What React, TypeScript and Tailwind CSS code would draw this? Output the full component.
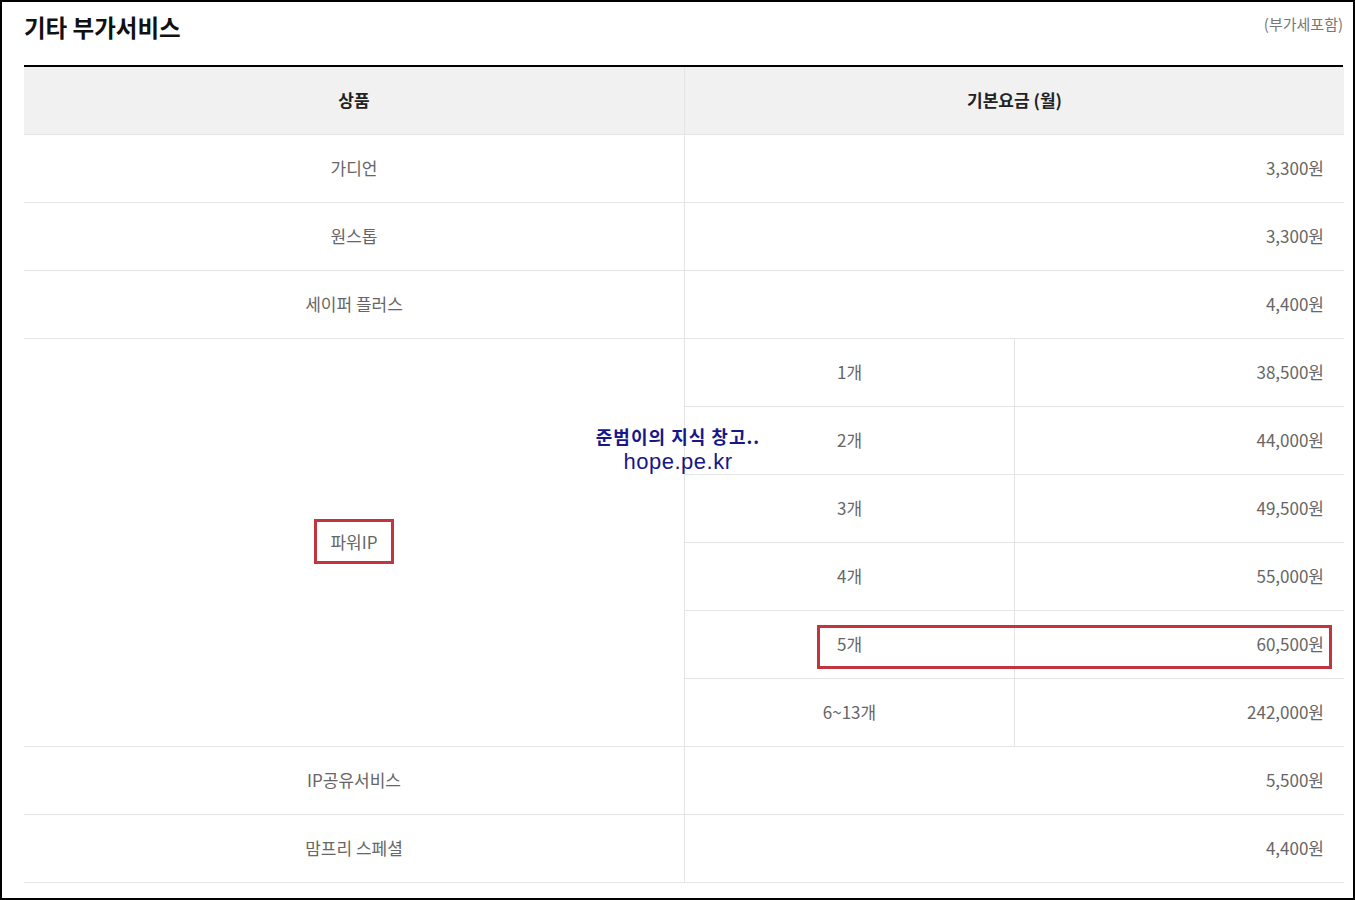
import React from 'react';

const font = { fontFamily: '"Noto Sans CJK KR", "Noto Sans", sans-serif' };

const simpleRows = [
  { name: '가디언', price: '3,300원' },
  { name: '원스톱', price: '3,300원' },
  { name: '세이퍼 플러스', price: '4,400원' },
];

const ipRows = [
  { count: '1개', price: '38,500원' },
  { count: '2개', price: '44,000원' },
  { count: '3개', price: '49,500원' },
  { count: '4개', price: '55,000원' },
  { count: '5개', price: '60,500원' },
  { count: '6~13개', price: '242,000원' },
];

const bottomRows = [
  { name: 'IP공유서비스', price: '5,500원' },
  { name: '맘프리 스페셜', price: '4,400원' },
];

function SimpleRow({ name, price }: { name: string; price: string }) {
  return (
    <>
      <div className="h-[68px] flex items-center justify-center pb-[2px] border-b border-[#e5e5e5]">{name}</div>
      <div className="col-span-2 h-[68px] flex items-center justify-end pr-[20px] pb-[2px] border-b border-l border-[#e5e5e5]">
        {price}
      </div>
    </>
  );
}

export default function App() {
  return (
    <div
      className="relative w-[1355px] h-[900px] overflow-hidden border-2 border-black bg-white pl-[22px] pr-[10px]"
      style={font}
    >
      <div className="flex items-start justify-between h-[63px]">
        <h2 className="mt-[9px] text-[23.5px] leading-[32px] font-bold text-[#111]">기타 부가서비스</h2>
        <span className="mt-[10px] text-[15px] leading-[24px] text-[#777]">(부가세포함)</span>
      </div>

      <div className="relative border-t-2 border-black">
        <div className="grid grid-cols-[660px_330px_330px] text-[17px] text-[#666]">
          <div className="h-[68px] flex items-center justify-center pb-[2px] bg-[#f1f1f1] border-b border-[#e5e5e5] font-bold text-[#222]">
            상품
          </div>
          <div className="col-span-2 h-[68px] flex items-center justify-center pb-[2px] bg-[#f1f1f1] border-b border-l border-[#e5e5e5] font-bold text-[#222]">
            기본요금 (월)
          </div>

          {simpleRows.map((r) => (
            <SimpleRow key={r.name} {...r} />
          ))}

          <div className="row-span-6 flex items-center justify-center pb-[2px] border-b border-[#e5e5e5]">
            <span className="border-[3px] border-[#c1353f] px-[13px] py-[7px]">파워IP</span>
          </div>
          {ipRows.map((r) => (
            <React.Fragment key={r.count}>
              <div className="h-[68px] flex items-center justify-center pb-[2px] border-b border-l border-[#e5e5e5]">
                {r.count}
              </div>
              <div className="h-[68px] flex items-center justify-end pr-[20px] pb-[2px] border-b border-l border-[#e5e5e5]">
                {r.price}
              </div>
            </React.Fragment>
          ))}

          {bottomRows.map((r) => (
            <SimpleRow key={r.name} {...r} />
          ))}
        </div>

        {/* highlight around 5개 row */}
        <div className="absolute left-[793px] top-[558px] w-[515px] h-[44px] border-[3px] border-[#c1353f]" />
      </div>

      {/* watermark */}
      <div className="absolute left-[576px] top-[421px] w-[200px] text-center text-[#17178a] leading-[26px]">
        <div className="text-[18px] font-bold tracking-[1px]">준범이의 지식 창고..</div>
        <div className="text-[22px] tracking-[0.5px]" style={{ fontFamily: '"Liberation Sans", Arial, sans-serif' }}>
          hope.pe.kr
        </div>
      </div>
    </div>
  );
}
